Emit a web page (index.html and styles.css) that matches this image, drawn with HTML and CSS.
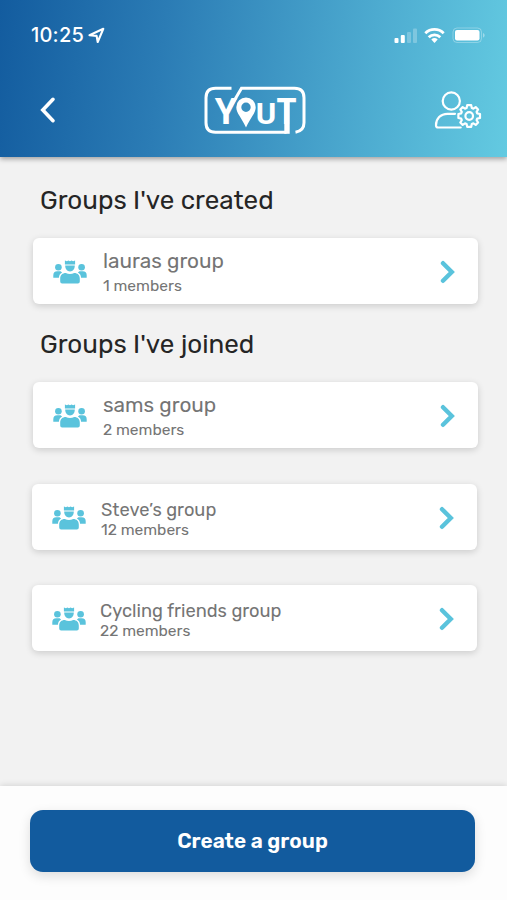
FILE: index.html
```html
<!DOCTYPE html>
<html lang="en">
<head>
<meta charset="utf-8">
<title>Groups</title>
<link rel="stylesheet" href="styles.css">
</head>
<body>
<svg class="defs" width="0" height="0" aria-hidden="true">
  <symbol id="people" viewBox="0 0 34 24">
    <circle cx="5.4" cy="7.2" r="3.3"/>
    <circle cx="28.6" cy="7.2" r="3.3"/>
    <path d="M0.3 17.800v-2.500a4 4 0 0 1 4-4h3.300l1.500 1.200c-2 1-3 2.800-3.200 5.300z"/>
    <path d="M33.700 17.800v-2.500a4 4 0 0 0-4-4h-3.300l-1.500 1.200c2 1 3 2.800 3.200 5.300z"/>
    <path d="M11.900 0.500l2 .8 1.500-.8 1.600.8 1.600-.8 1.500.8 2-.8v4H11.900z"/>
    <path d="M12.200 5.600h9.600c0 3.600-2 5.800-4.800 5.800S12.200 9.200 12.200 5.600z"/>
    <path d="M7.200 21.500v-2.800c0-3.600 2.300-5.700 5.600-5.700 2.500 1.200 5.900 1.200 8.400 0 3.300 0 5.600 2.100 5.600 5.700v2.800q0 1.900-1.900 1.900H9.100q-1.900 0-1.900-1.900z"/>
  </symbol>
  <symbol id="chevron" viewBox="0 0 16 24">
    <path d="M3 3.200l8.800 8.800-8.800 8.800" fill="none" stroke="currentColor" stroke-width="4.400" stroke-linecap="round" stroke-linejoin="miter"/>
  </symbol>
</svg>
<div class="screen">
  <header class="header">
    <div class="status">
      <span class="time">10:25</span>
      <svg class="locate" width="17" height="17" viewBox="0 0 17 17"><path d="M1.500 8.300L15.300 1.800 9.700 15 8.600 8.900z" fill="none" stroke="#fff" stroke-width="2.100" stroke-linejoin="round"/></svg>
      <svg class="indicators" width="94" height="20" viewBox="392 24 94 20" fill="#fff">
        <rect x="394.500" y="37" width="4" height="5" rx="1"/>
        <rect x="400.800" y="34" width="4" height="8" rx="1"/>
        <rect x="407" y="31" width="4" height="11" rx="1" opacity=".25"/>
        <rect x="413" y="27.500" width="4" height="14.500" rx="1" opacity=".25"/>
        <g fill="none" stroke="#fff" stroke-width="2.800">
          <path d="M425.300 32.200a13.200 13.200 0 0 1 18.400 0"/>
          <path d="M428.700 36.200a8.300 8.300 0 0 1 11.600 0"/>
        </g>
        <path d="M431.300 38.600a4.700 4.700 0 0 1 6.400 0l-3.200 3.500z"/>
        <rect x="453" y="27" width="28.500" height="14.500" rx="4" fill="none" stroke="#fff" opacity=".3"/>
        <rect x="455" y="29" width="24.500" height="10.500" rx="2"/>
        <path d="M483 32c2.200 1 2.200 3.600 0 4.600z" opacity=".4"/>
      </svg>
    </div>
    <div class="nav">
      <svg class="back" width="18" height="28" viewBox="0 0 18 28"><path d="M14 3.300L3.800 14 14 24.700" fill="none" stroke="#fff" stroke-width="3.600" stroke-linecap="round"/></svg>
      <svg class="logo" width="104" height="50" viewBox="203 85 104 50">
        <g fill="none" stroke="#fff" stroke-width="3">
          <path d="M231.500 88.300h-16q-9.500 0-9.500 9.500v25q0 9.500 9.500 9.500h71"/>
          <path d="M229 109.500l12.500-21.200h53q9.500 0 9.500 9.500v25q0 8-8.500 9.500"/>
          <path d="M287 100v33.800" stroke-width="5.400"/>
        </g>
        <text class="logo-text" x="214.800" y="123.800" font-size="37" textLength="22.500" lengthAdjust="spacingAndGlyphs">Y</text>
        <text class="logo-text" x="255.800" y="123.600" font-size="30" textLength="20.500" lengthAdjust="spacingAndGlyphs">U</text>
        <text class="logo-text" x="276.500" y="123.800" font-size="37" textLength="20" lengthAdjust="spacingAndGlyphs">T</text>
        <path fill="#fff" fill-rule="evenodd" d="M246 97.500a9.700 9.700 0 0 1 9.700 9.700c0 6.200-5.200 10-9.700 20.300-4.500-10.300-9.700-14.100-9.700-20.300A9.700 9.700 0 0 1 246 97.500zm0 5a4.700 4.700 0 1 0 0 9.400 4.700 4.700 0 0 0 0-9.400z"/>
      </svg>
      <svg class="account" width="48" height="40" viewBox="434 91 48 40" fill="none" stroke="#fff" stroke-width="2.200" stroke-linecap="round" stroke-linejoin="round">
        <circle cx="451.300" cy="102" r="8.600"/>
        <path d="M455 114.800h-7.500c-7 0-11.500 5-11.500 11.400 0 1.500.8 2.300 2.200 2.300h22.500"/>
        <path transform="translate(469.200 117)" d="M-2-10.800H2L2.600-8 4.200-7.400 6.500-8.900 8.900-6.500 7.400-4.200 8-2.600 10.800-2V2L8 2.600 7.400 4.200 8.900 6.500 6.500 8.900 4.200 7.400 2.600 8 2 10.800H-2L-2.600 8-4.200 7.400-6.500 8.900-8.900 6.500-7.400 4.200-8 2.600-10.800 2V-2L-8-2.600-7.400-4.200-8.900-6.500-6.500-8.900-4.200-7.400-2.600-8z"/>
        <circle cx="469.200" cy="117" r="3.800"/>
      </svg>
    </div>
  </header>
  <main class="content">
    <h1 class="heading">Groups I've created</h1>
    <div class="card">
      <svg class="people"><use href="#people"/></svg>
      <div class="info"><div class="name">lauras group</div><div class="members">1 members</div></div>
      <svg class="chevron"><use href="#chevron"/></svg>
    </div>
    <h1 class="heading joined">Groups I've joined</h1>
    <div class="card">
      <svg class="people"><use href="#people"/></svg>
      <div class="info"><div class="name">sams group</div><div class="members">2 members</div></div>
      <svg class="chevron"><use href="#chevron"/></svg>
    </div>
    <div class="card compact">
      <svg class="people"><use href="#people"/></svg>
      <div class="info"><div class="name">Steve’s group</div><div class="members">12 members</div></div>
      <svg class="chevron"><use href="#chevron"/></svg>
    </div>
    <div class="card compact last">
      <svg class="people"><use href="#people"/></svg>
      <div class="info"><div class="name">Cycling friends group</div><div class="members">22 members</div></div>
      <svg class="chevron"><use href="#chevron"/></svg>
    </div>
  </main>
  <footer class="footer"><button class="create">Create a group</button></footer>
</div>
</body>
</html>
```
FILE: styles.css
```css
* { box-sizing: border-box; }
body { margin: 0; font-family: Rubik, Roboto, sans-serif; }
.defs { display: block; }
.screen { width: 507px; height: 900px; display: flex; flex-direction: column; background: #f2f2f2; overflow: hidden; }
.header { height: 157px; flex: none; background: linear-gradient(97deg, #135c9f 0%, #2b7cb5 32%, #4dabd0 72%, #63cae1 100%); box-shadow: 0 2px 5px rgba(0,0,0,.35); }
.status { height: 70px; display: flex; align-items: center; padding: 0 21px 0 31px; }
.time { font: 500 20px/24px Inter, sans-serif; color: #fff; letter-spacing: .2px; }
.locate { margin-left: 4px; }
.indicators { margin-left: auto; }
.nav { height: 80px; display: flex; align-items: center; padding: 0 25px 0 39px; }
.logo { margin-left: 146px; }
.account { margin-left: auto; }
.logo-text { fill: #fff; font-family: Roboto, sans-serif; font-weight: 700; }
.content { flex: 1; display: flex; flex-direction: column; padding: 26px 29px 0 33px; }
.heading { margin: 0 0 0 7px; height: 55px; font-size: 26px; line-height: 36px; font-weight: 400; color: #252525; }
.joined { margin-top: 23px; }
.card { width: 445px; height: 66px; flex: none; display: flex; align-items: center; padding: 0 22px 0 20px; border-radius: 6px; background: #fff; box-shadow: 0 2px 7px rgba(0,0,0,.16); color: #757575; }
.people { width: 34px; height: 24px; flex: none; fill: #5ac3dc; margin-top: 2px; }
.info { flex: 1; margin-left: 16px; padding-top: 4px; white-space: nowrap; }
.name { font-size: 20.800px; line-height: 25px; }
.members { font-size: 15.600px; line-height: 23px; }
.chevron { width: 16px; height: 24px; color: #5ac3dc; margin-top: 2px; }
.compact { margin: 36px 0 0 -1px; }
.compact .name { font-size: 18.300px; line-height: 22px; }
.compact .members { line-height: 18px; }
.compact .info { margin-left: 15px; }
.last { margin-top: 35px; }
.last .info { margin-left: 14px; }
.footer { height: 114px; flex: none; padding: 24px 32px 0 30px; background: #fdfdfd; box-shadow: 0 -1px 6px rgba(0,0,0,.12); }
.create { display: block; width: 100%; height: 62px; padding: 0; border: 0; border-radius: 13px; background: #125b9e; box-shadow: 0 4px 12px rgba(0,0,0,.13); color: #fff; font: 600 20.800px/24px Rubik, Roboto, sans-serif; }
```
